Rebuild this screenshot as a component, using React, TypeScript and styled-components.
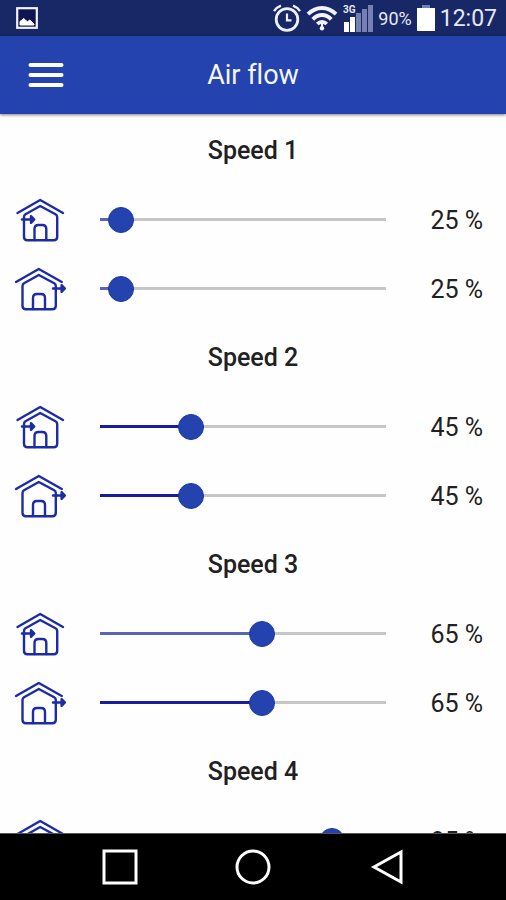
import React, { useState } from "react";
import styled, { createGlobalStyle } from "styled-components";

const GlobalStyle = createGlobalStyle`
  * { box-sizing: border-box; }
  body {
    margin: 0;
    background: #fff;
    font-family: Roboto, "Liberation Sans", sans-serif;
    color: #212121;
  }
`;

const Screen = styled.div`
  display: flex;
  flex-direction: column;
  height: 100vh;
  background: #fefefe;
`;

const StatusBar = styled.div`
  flex: none;
  display: flex;
  align-items: center;
  height: 36px;
  padding: 0 9px 0 16px;
  background: #182766;
  color: #e6e9f5;
`;

const StatusIcons = styled.div`
  display: flex;
  align-items: center;
  gap: 5px;
  margin-left: auto;
`;

const StatusText = styled.span<{ $size: number }>`
  padding-top: 2px;
  font-size: ${(p) => p.$size}px;
  line-height: 28px;
`;

const AppBar = styled.header`
  flex: none;
  display: grid;
  grid-template-columns: 92px 1fr 92px;
  align-items: center;
  height: 78px;
  background: #2443ae;
  color: #f4f6ff;
  box-shadow: 0 1px 3px rgba(0, 0, 0, 0.5);
  z-index: 1;
`;

const BareButton = styled.button`
  display: flex;
  align-items: center;
  justify-content: center;
  height: 100%;
  padding: 0;
  border: 0;
  background: transparent;
  color: #fff;
  cursor: pointer;
`;

const Title = styled.h1`
  margin: 0;
  font-size: 27px;
  font-weight: 400;
  line-height: 32px;
  text-align: center;
  font-variant-ligatures: none;
`;

const Content = styled.main`
  flex: 1;
  min-height: 0;
  padding-top: 2px;
  overflow-y: auto;
  scrollbar-width: none;
`;

const SpeedHeading = styled.h2`
  margin: 0;
  font-size: 25px;
  font-weight: 500;
  line-height: 69px;
  text-align: center;
`;

const FlowRow = styled.div`
  display: grid;
  grid-template-columns: 52px 1fr 61px;
  gap: 24px;
  align-items: center;
  height: 69px;
  padding: 0 23px 0 14px;
`;

const SliderBox = styled.div`
  display: grid;
  align-items: center;
`;

const Track = styled.div`
  grid-area: 1 / 1;
  height: 3px;
  margin: 0 12px 0 10px;
  background: #c6c6c6;
`;

const Fill = styled.div<{ $soft: boolean }>`
  height: 3px;
  background: ${(p) => (p.$soft ? "#5a66b4" : "#1a1c9c")};
`;

const RangeInput = styled.input`
  grid-area: 1 / 1;
  width: 100%;
  height: 26px;
  margin: 0;
  background: transparent;
  appearance: none;
  cursor: pointer;

  &::-webkit-slider-thumb {
    appearance: none;
    width: 26px;
    height: 26px;
    border: 1px solid #1c38a6;
    border-radius: 50%;
    background: #2443ae;
  }
`;

const Value = styled.output`
  padding-top: 2px;
  font-size: 25px;
  line-height: 32px;
  text-align: right;
  white-space: nowrap;
`;

const NavBar = styled.nav`
  flex: none;
  display: grid;
  grid-template-columns: repeat(3, 1fr);
  height: 67px;
  padding: 0 53px;
  border-top: 1px solid #555;
  background: #000;
`;

type Direction = "in" | "out";

function HouseIcon({ direction }: { direction: Direction }) {
  return (
    <svg width="52" height="48" viewBox="0 0 52 48" fill="none" stroke="#1c2ba6" strokeWidth="2.4" strokeLinecap="round" strokeLinejoin="round" aria-hidden="true">
      {direction === "in" ? (
        <>
          <path d="M3.5 17 26.2 4 49 17" />
          <path d="M10 21 Q10 19.2 11.5 18.3 L26.2 10 41.5 18.3 Q43.2 19.2 43.2 21 V40.8 Q43.2 44.3 39.7 44.3 H13.5 Q10 44.3 10 40.8Z" />
          <path d="M20.5 44V33Q20.5 29 24.5 29H28.3Q32.3 29 32.3 33V44" />
          <path d="M8 23.5H20M17 20.2 20.3 23.5 17 26.8Z" />
        </>
      ) : (
        <>
          <path d="M2 17 24.8 4 47.8 17" />
          <path d="M41.8 28V21Q41.8 19.2 40.2 18.3L24.8 10 10 18.3Q8.5 19.2 8.5 21V40.8Q8.5 44.3 12 44.3H38.3Q41.8 44.3 41.8 40.8V21" />
          <path d="M19 44V33Q19 29 23 29H27Q31 29 31 33V44" />
          <path d="M39 23.5H51M47.6 20.2 50.9 23.5 47.6 26.8Z" />
        </>
      )}
    </svg>
  );
}

function PictureIcon() {
  return (
    <svg width="22" height="22" viewBox="0 0 22 22" aria-hidden="true">
      <rect x="1.2" y="1.2" width="19.6" height="19.6" fill="#0d1650" stroke="#f2f3fa" strokeWidth="2.2" />
      <path d="M4 18V14.5L6 13 7.5 11.5 9.5 13 11.5 15 13.5 13 15.5 14.5 18 17V18Z" fill="#fff" stroke="#fff" strokeLinejoin="round" />
    </svg>
  );
}

function AlarmIcon() {
  return (
    <svg width="28" height="28" viewBox="0 0 28 28" fill="none" stroke="#eef0fa" strokeWidth="2.8" aria-hidden="true">
      <circle cx="14" cy="15.5" r="10.8" />
      <path d="M14 9.5V16.3H18.5" strokeWidth="2.2" />
      <path d="M1 7.2Q3.5 3.2 8 1.6M27 7.2Q24.5 3.2 20 1.6" strokeWidth="2.4" />
    </svg>
  );
}

function WifiIcon() {
  return (
    <svg width="32" height="26" viewBox="0 0 32 26" fill="none" stroke="#f2f3fa" strokeWidth="3.8" aria-hidden="true">
      <path d="M2 9.2Q8.2 3 16 3T30 9.2" />
      <path d="M6.8 14.4Q10.8 10 16 10T25.2 14.4" />
      <path d="M11.3 19Q13.3 16.8 16 16.8T20.7 19" />
      <circle cx="16" cy="23.2" r="2.2" fill="#f2f3fa" stroke="none" />
      <path d="M16 16V22" strokeWidth="2" />
    </svg>
  );
}

function SignalIcon() {
  return (
    <svg width="30" height="28" viewBox="0 0 30 28" aria-hidden="true">
      <text x="0" y="9" fontSize="10" fontWeight="700" fontFamily="Roboto, sans-serif" fill="#e6e9f5">3G</text>
      <path d="M1 18H6V28H1Z M7 13H12V28H7Z" fill="#fff" />
      <path d="M13 9H18V28H13Z M19 5H24V28H19Z M25 1H30V28H25Z" fill="#7581b2" />
    </svg>
  );
}

function BatteryIcon() {
  return (
    <svg width="18" height="28" viewBox="0 0 18 28" aria-hidden="true">
      <path d="M5 1H13V4H5Z" fill="#7581b2" />
      <path d="M0 4H18V27H0Z" fill="#fff" />
    </svg>
  );
}

interface Flow {
  direction: Direction;
  value: number;
  soft?: boolean;
}

const speeds: { name: string; flows: Flow[] }[] = [
  { name: "Speed 1", flows: [{ direction: "in", value: 25, soft: true }, { direction: "out", value: 25, soft: true }] },
  { name: "Speed 2", flows: [{ direction: "in", value: 45 }, { direction: "out", value: 45 }] },
  { name: "Speed 3", flows: [{ direction: "in", value: 65, soft: true }, { direction: "out", value: 65 }] },
  { name: "Speed 4", flows: [{ direction: "in", value: 85 }, { direction: "out", value: 85 }] },
];

const MIN = 20;
const MAX = 100;

function FlowControl({ name, flow }: { name: string; flow: Flow }) {
  const [value, setValue] = useState(flow.value);
  const id = `${name}-${flow.direction}`.replace(" ", "-").toLowerCase();
  const filled = ((value - MIN) / (MAX - MIN)) * 100;
  return (
    <FlowRow>
      <HouseIcon direction={flow.direction} />
      <SliderBox>
        <Track>
          <Fill $soft={!!flow.soft} style={{ width: `${filled}%` }} />
        </Track>
        <RangeInput
          id={id}
          type="range"
          min={MIN}
          max={MAX}
          value={value}
          aria-label={`${name}, air ${flow.direction}`}
          onChange={(e) => setValue(Number(e.target.value))}
        />
      </SliderBox>
      <Value htmlFor={id}>{value} %</Value>
    </FlowRow>
  );
}

export default function App() {
  return (
    <>
      <GlobalStyle />
      <Screen>
        <StatusBar>
          <PictureIcon />
          <StatusIcons>
            <AlarmIcon />
            <WifiIcon />
            <SignalIcon />
            <StatusText $size={18}>90%</StatusText>
            <BatteryIcon />
            <StatusText $size={23}>12:07</StatusText>
          </StatusIcons>
        </StatusBar>
        <AppBar>
          <BareButton aria-label="Menu">
            <svg width="36" height="26" viewBox="0 0 36 26" stroke="#fff" strokeWidth="4" strokeLinecap="round">
              <path d="M2.5 3H33.5M2.5 13H33.5M2.5 23H33.5" />
            </svg>
          </BareButton>
          <Title>Air flow</Title>
        </AppBar>
        <Content>
          {speeds.map((s) => (
            <section key={s.name}>
              <SpeedHeading>{s.name}</SpeedHeading>
              {s.flows.map((f) => (
                <FlowControl key={f.direction} name={s.name} flow={f} />
              ))}
            </section>
          ))}
        </Content>
        <NavBar>
          <BareButton aria-label="Recent apps">
            <svg width="36" height="36" viewBox="0 0 36 36" fill="none" stroke="#fff" strokeWidth="3">
              <rect x="2" y="2" width="32" height="32" />
            </svg>
          </BareButton>
          <BareButton aria-label="Home">
            <svg width="36" height="36" viewBox="0 0 36 36" fill="none" stroke="#fff" strokeWidth="3">
              <circle cx="18" cy="18" r="16" />
            </svg>
          </BareButton>
          <BareButton aria-label="Back">
            <svg width="36" height="36" viewBox="0 0 36 36" fill="none" stroke="#fff" strokeWidth="3">
              <path d="M33 3V33L6 18Z" />
            </svg>
          </BareButton>
        </NavBar>
      </Screen>
    </>
  );
}
